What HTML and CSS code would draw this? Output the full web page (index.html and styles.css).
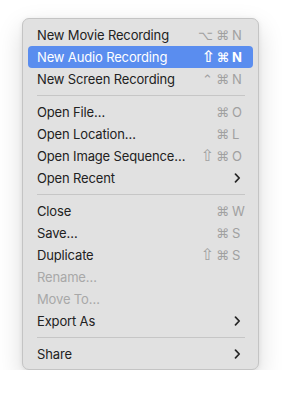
FILE: index.html
```html
<!DOCTYPE html>
<html>
<head>
<meta charset="utf-8">
<link rel="stylesheet" href="styles.css">
</head>
<body>
<div class="menu">
  <div class="item"><span class="label">New Movie Recording</span><span class="keys"><span class="mod">⌥</span><span class="cmd">⌘</span><span class="key">N</span></span></div>
  <div class="item active"><span class="label">New Audio Recording</span><span class="keys"><span class="mod shift">⇧</span><span class="cmd">⌘</span><span class="key">N</span></span></div>
  <div class="item"><span class="label">New Screen Recording</span><span class="keys"><span class="mod">⌃</span><span class="cmd">⌘</span><span class="key">N</span></span></div>
  <div class="sep"></div>
  <div class="item"><span class="label">Open File…</span><span class="keys"><span class="cmd">⌘</span><span class="key">O</span></span></div>
  <div class="item"><span class="label">Open Location…</span><span class="keys"><span class="cmd">⌘</span><span class="key">L</span></span></div>
  <div class="item"><span class="label">Open Image Sequence…</span><span class="keys"><span class="mod shift">⇧</span><span class="cmd">⌘</span><span class="key">O</span></span></div>
  <div class="item"><span class="label">Open Recent</span><svg class="chev" width="7" height="10" viewBox="0 0 7 10"><path d="M1.5 1.2 L5.2 5 L1.5 8.8" fill="none" stroke="#262626" stroke-width="1.7" stroke-linecap="round" stroke-linejoin="round"/></svg></div>
  <div class="sep"></div>
  <div class="item"><span class="label">Close</span><span class="keys"><span class="cmd">⌘</span><span class="key">W</span></span></div>
  <div class="item"><span class="label">Save…</span><span class="keys"><span class="cmd">⌘</span><span class="key">S</span></span></div>
  <div class="item"><span class="label">Duplicate</span><span class="keys"><span class="mod shift">⇧</span><span class="cmd">⌘</span><span class="key">S</span></span></div>
  <div class="item disabled"><span class="label">Rename…</span></div>
  <div class="item disabled"><span class="label">Move To…</span></div>
  <div class="item"><span class="label">Export As</span><svg class="chev" width="7" height="10" viewBox="0 0 7 10"><path d="M1.5 1.2 L5.2 5 L1.5 8.8" fill="none" stroke="#262626" stroke-width="1.7" stroke-linecap="round" stroke-linejoin="round"/></svg></div>
  <div class="sep"></div>
  <div class="item"><span class="label">Share</span><svg class="chev" width="7" height="10" viewBox="0 0 7 10"><path d="M1.5 1.2 L5.2 5 L1.5 8.8" fill="none" stroke="#262626" stroke-width="1.7" stroke-linecap="round" stroke-linejoin="round"/></svg></div>
</div>
</body>
</html>
```

FILE: styles.css
```css
html, body {
  margin: 0;
  padding: 0;
  background: #ffffff;
}
body {
  padding: 18px 0 0 22px;
  font-family: Inter, "Noto Sans", sans-serif;
}
.menu {
  box-sizing: border-box;
  width: 237px;
  background: #e1e1e1;
  border: 1px solid #c4c4c4;
  border-radius: 7px;
  padding: 5px 5px 4px 5px;
  box-shadow: 0 10px 26px rgba(0,0,0,0.15), 0 1px 5px rgba(0,0,0,0.08);
}
.item {
  height: 22px;
  display: flex;
  align-items: center;
  justify-content: space-between;
  padding: 0 11px 0 9px;
  border-radius: 4px;
  font-size: 13px;
  color: #222222;
}
.label {
  letter-spacing: -0.15px;
}
.item.active {
  background: #5a8def;
  color: #ffffff;
}
.item.disabled {
  color: #a8a8a8;
}
.keys {
  display: flex;
  align-items: center;
  color: #a0a0a0;
  font-family: "DejaVu Sans", sans-serif;
  font-size: 13px;
  line-height: 1;
}
.item.active .keys {
  color: #ffffff;
  font-weight: bold;
}
.mod {
  margin-right: 3px;
}
.mod.shift {
  font-size: 16px;
  margin-right: 2px;
}
.cmd {
  margin-right: 3px;
}
.key {
  font-family: Inter, "Noto Sans", sans-serif;
  font-size: 13px;
  width: 10px;
  text-align: left;
}
.chev {
  display: block;
  margin-right: 1px;
}
.sep {
  height: 1px;
  background: #c6c6c6;
  margin: 5px 8px 5px 9px;
}
```
